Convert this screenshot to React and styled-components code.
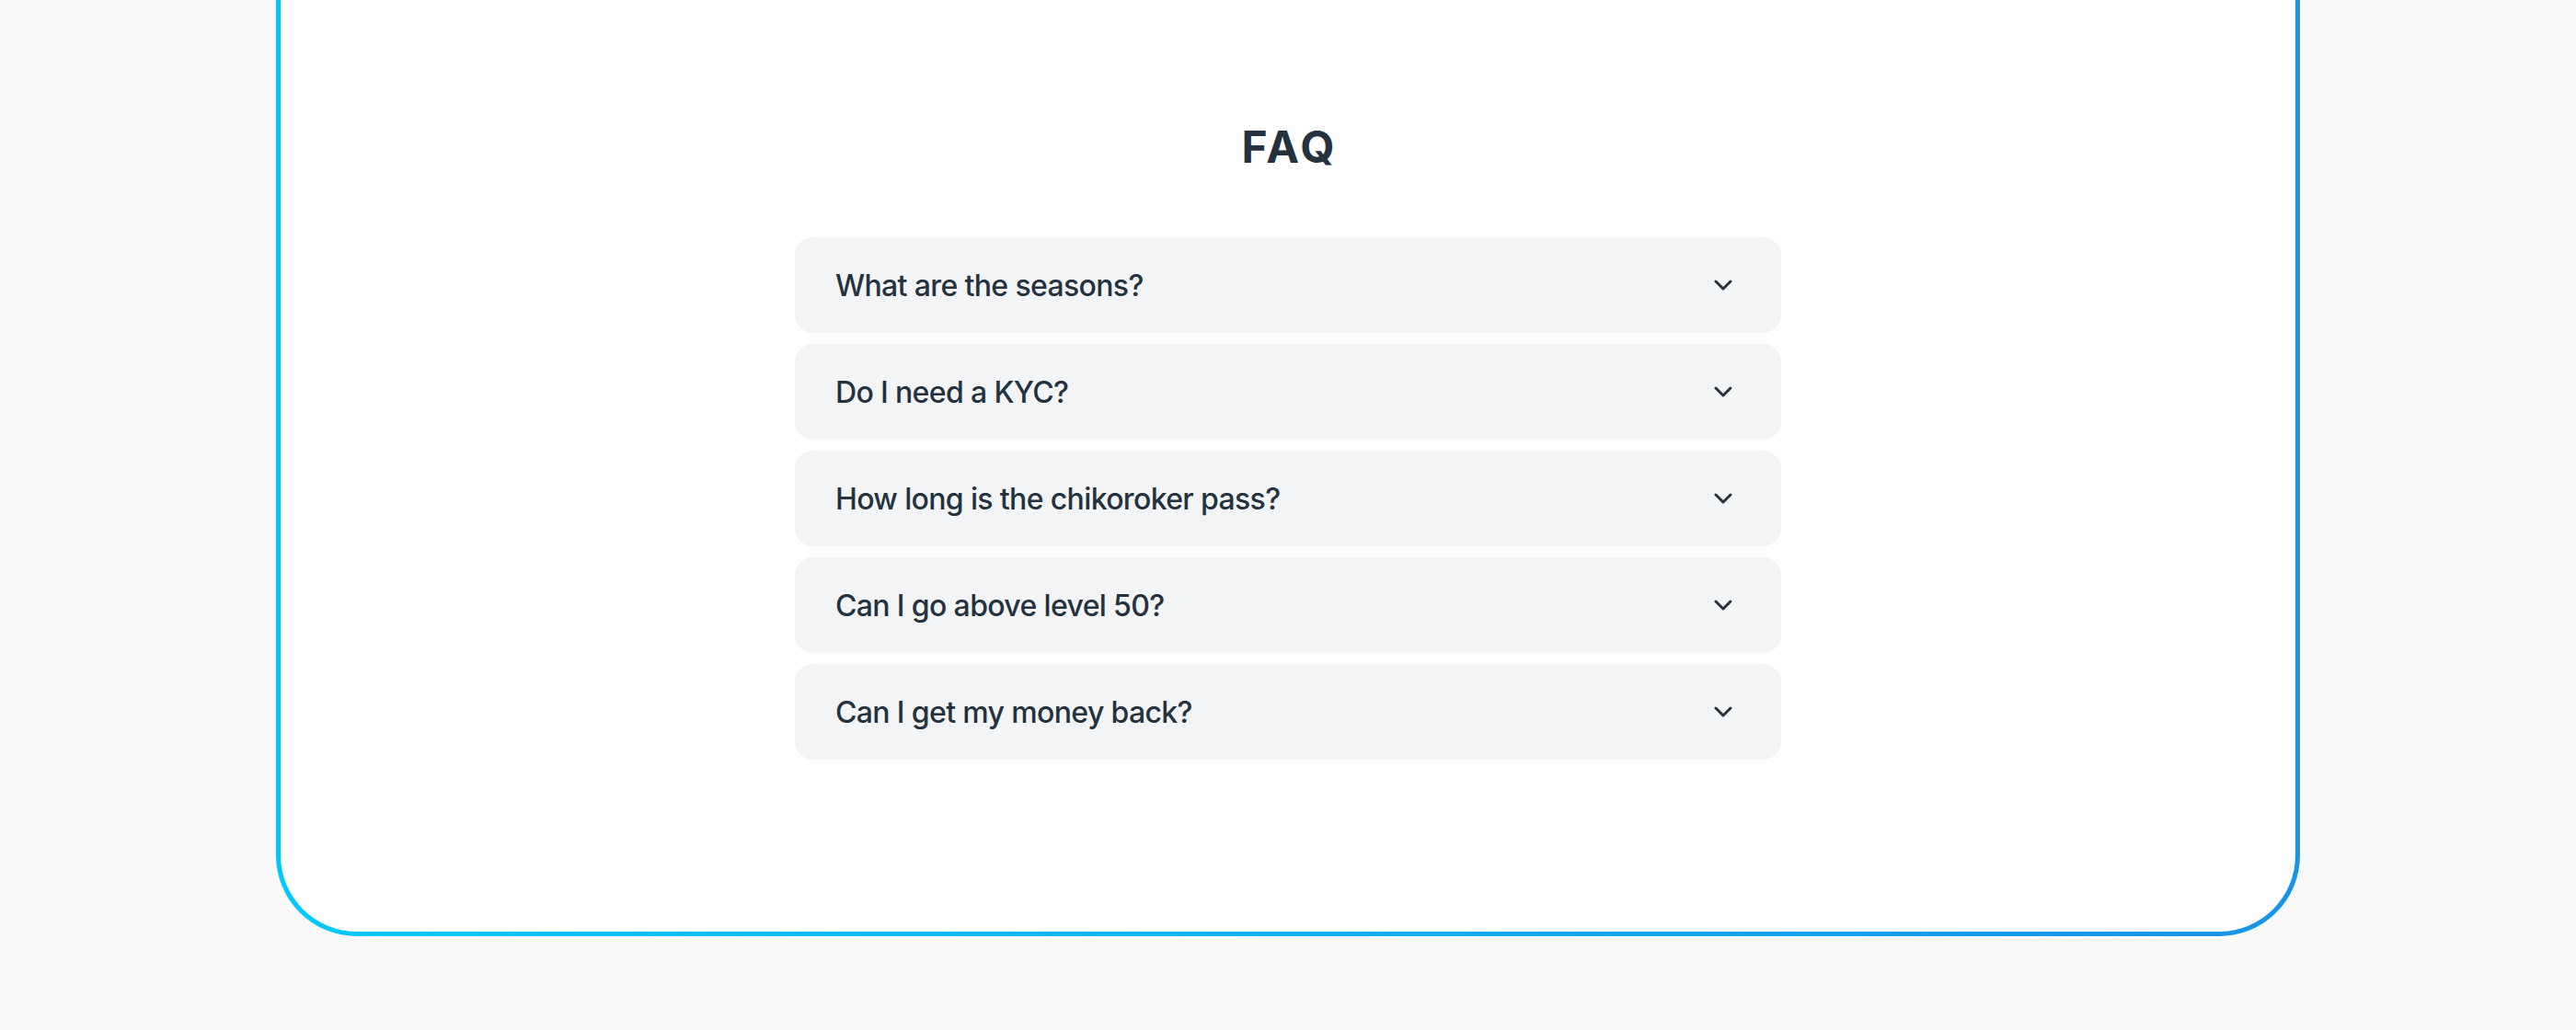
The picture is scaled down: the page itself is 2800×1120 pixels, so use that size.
import React from 'react';
import styled, { createGlobalStyle } from 'styled-components';

const GlobalStyle = createGlobalStyle`
    html, body {
        margin: 0;
        padding: 0;
        background-color: #f9f9f9;
        font-family: Inter, "Liberation Sans", sans-serif;
    }
`;

const questions = [
    'What are the seasons?',
    'Do I need a KYC?',
    'How long is the chikoroker pass?',
    'Can I go above level 50?',
    'Can I get my money back?',
];

const Chevron = () => (
    <svg width="20" height="12" viewBox="0 0 20 12" fill="none">
        <path d="M2 2L10 10L18 2" stroke="#243240" strokeWidth="3" strokeLinecap="round" strokeLinejoin="round"/>
    </svg>
);

const App = () => {
    return (
        <Page>
            <GlobalStyle/>
            <Card>
                <Title>FAQ</Title>
                <List>
                    {questions.map((q) => (
                        <Item key={q}>
                            <Question>{q}</Question>
                            <Chevron/>
                        </Item>
                    ))}
                </List>
            </Card>
        </Page>
    );
}

export default App;

const Page = styled.div`
    width: 2800px;
    height: 1120px;
    display: flex;
    justify-content: center;
    align-items: flex-start;
`

const Card = styled.section`
    box-sizing: border-box;
    width: 2200px;
    height: 1018px;
    padding: 136px 0 0;
    border: 5px solid transparent;
    border-top: none;
    border-radius: 0 0 88px 88px;
    background:
        linear-gradient(#ffffff, #ffffff) padding-box,
        linear-gradient(90deg, #00c8ff 0%, #1894e8 100%) border-box;
    display: flex;
    flex-direction: column;
    align-items: center;
`

const Title = styled.h2`
    margin: 0 0 74px;
    padding-left: 3px;
    font-size: 48px;
    line-height: 48px;
    font-weight: 700;
    color: #243240;
    letter-spacing: 3px;
`

const List = styled.div`
    width: 1072px;
    display: flex;
    flex-direction: column;
    gap: 12px;
`

const Item = styled.div`
    height: 104px;
    box-sizing: border-box;
    padding: 0 43px 0 44px;
    background-color: #f3f4f6;
    border-radius: 20px;
    display: flex;
    align-items: center;
    justify-content: space-between;
    cursor: pointer;
    svg{
        margin-right: 10px;
    }
`

const Question = styled.span`
    font-size: 32px;
    font-weight: 500;
    color: #243240;
    letter-spacing: -0.02em;
`
